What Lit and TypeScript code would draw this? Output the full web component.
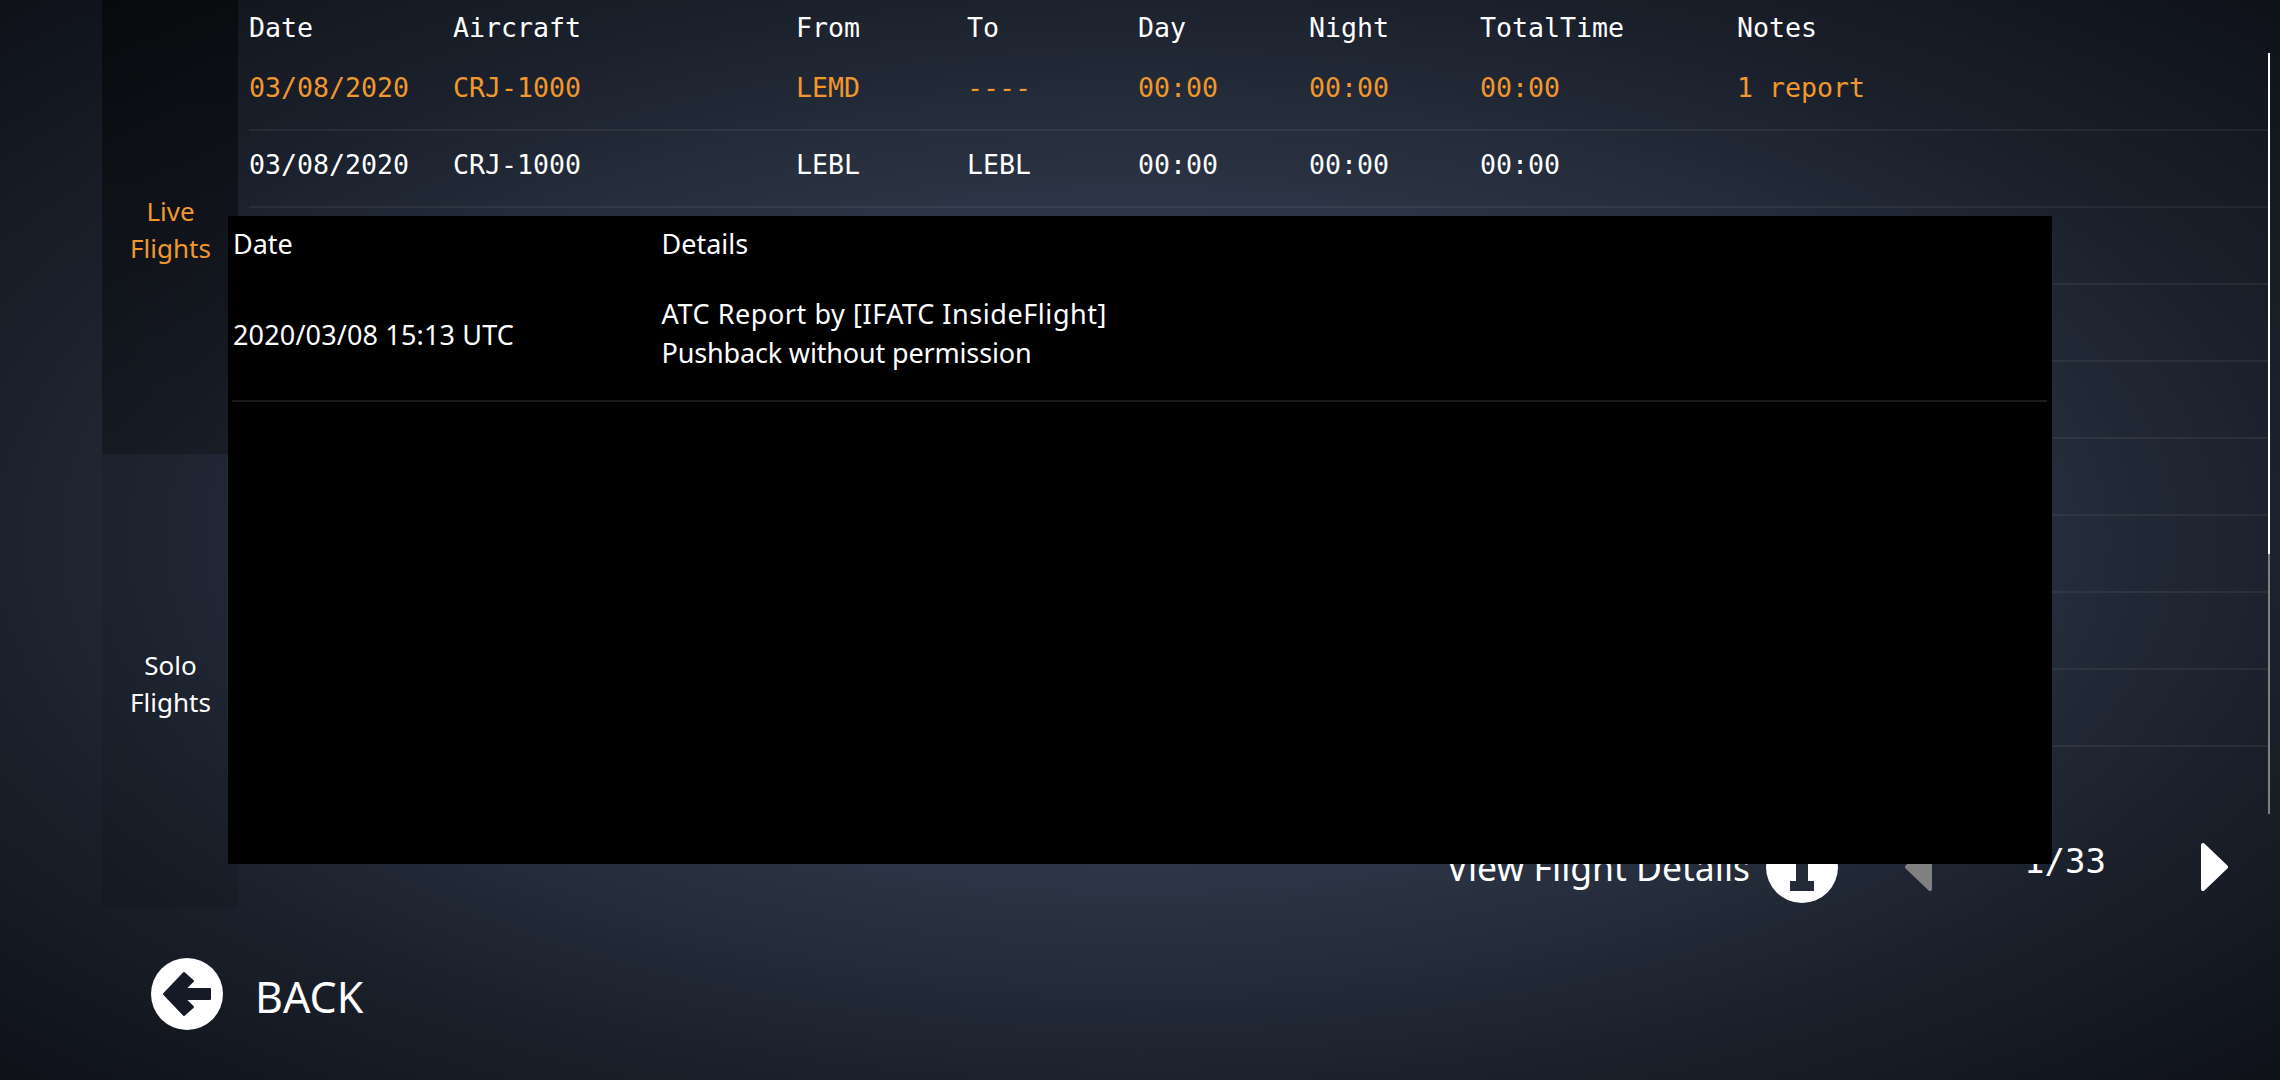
import { LitElement, html, css } from "lit";
import { customElement } from "lit/decorators.js";

const rows = [
  { cells: ["03/08/2020", "CRJ-1000", "LEMD", "----", "00:00", "00:00", "00:00", "1 report"], active: true },
  { cells: ["03/08/2020", "CRJ-1000", "LEBL", "LEBL", "00:00", "00:00", "00:00", ""], active: false },
  ...Array.from({ length: 7 }, () => ({ cells: [] as string[], active: false })),
];

@customElement("app-root")
export class AppRoot extends LitElement {
  static styles = css`
    :host {
      display: block;
      width: 2280px;
      height: 1080px;
      position: relative;
      overflow: hidden;
      color: #fff;
      font-family: "Noto Sans", sans-serif;
      background: radial-gradient(ellipse farthest-corner at 50% 50%, #363f54 0%, #2c3445 45%, #1b212c 72%, #0e1118 100%);
    }
    .top { display: flex; height: 908px; padding-left: 102px; }
    .side { width: 136px; display: flex; flex-direction: column; flex: none; }
    .tab {
      flex: 1;
      display: flex;
      align-items: center;
      justify-content: center;
      text-align: center;
      box-sizing: border-box;
      padding: 6px 0 0 1px;
      font-size: 26px;
      line-height: 37px;
      background: rgba(0, 0, 0, 0.1);
    }
    .tab.active {
      color: #f0982e;
      background: linear-gradient(180deg, rgba(0, 0, 0, 0.5), rgba(0, 0, 0, 0.33));
    }
    .main { flex: 1; display: flex; flex-direction: column; padding-left: 11px; padding-right: 10px; }
    .mono { font-family: "DejaVu Sans Mono", monospace; font-size: 26.6px; }
    .grid { display: grid; grid-template-columns: 204px 343px 171px 171px 171px 171px 257px 1fr; align-items: center; white-space: pre; }
    .head { height: 53px; padding-top: 2px; box-sizing: border-box; }
    .body { display: flex; height: 761px; }
    .list { flex: 1; padding-top: 1px; }
    .row { height: 77px; box-sizing: border-box; border-bottom: 2px solid rgba(255, 255, 255, 0.06); padding-bottom: 9px; }
    .row.active { color: #f0982e; }
    .bar { width: 2px; display: flex; flex-direction: column; }
    .thumb { height: 501px; background: #fff; }
    .track { flex: 1; background: #808080; }
    .foot { flex: 1; display: flex; justify-content: flex-end; align-items: center; padding: 17px 42px 5px 0; }
    .view { font-size: 35.5px; white-space: nowrap; margin-right: 16px; }
    .prev { margin-left: 67px; }
    .pager { font-family: "DejaVu Sans Mono", monospace; font-size: 34px; margin: 0 95px 13px 92px; }
    svg { display: block; flex: none; }
    .bottom { display: flex; align-items: flex-start; padding: 50px 0 0 151px; }
    .back { font-size: 43px; margin-left: 32px; line-height: 72px; padding-top: 3px; }
    .modal {
      position: absolute;
      left: 228px;
      top: 216px;
      width: 1824px;
      height: 648px;
      box-sizing: border-box;
      padding: 0 5px 0 5px;
      background: #000;
      font-size: 27px;
    }
    .m-grid { display: grid; grid-template-columns: 428.5px 1fr; align-items: center; }
    .m-head { height: 50px; padding-top: 4px; box-sizing: border-box; }
    .m-row { height: 136px; border-bottom: 2px solid #1a1a1a; box-sizing: border-box; margin-left: -1px; padding-left: 1px; }
    .m-date { letter-spacing: 0.15px; padding-top: 2px; }
    .lines { line-height: 39px; }
    .l1 { letter-spacing: 0.56px; }
    .l2 { letter-spacing: -0.16px; }
  `;

  render() {
    return html`
      <div class="top">
        <div class="side">
          <div class="tab active">Live<br />Flights</div>
          <div class="tab">Solo<br />Flights</div>
        </div>
        <div class="main">
          <div class="grid head mono">
            ${["Date", "Aircraft", "From", "To", "Day", "Night", "TotalTime", "Notes"].map((h) => html`<span>${h}</span>`)}
          </div>
          <div class="body">
            <div class="list mono">
              ${rows.map(
                (r) => html`<div class="grid row ${r.active ? "active" : ""}">${r.cells.map((c) => html`<span>${c}</span>`)}</div>`
              )}
            </div>
            <div class="bar"><div class="thumb"></div><div class="track"></div></div>
          </div>
          <div class="foot">
            <span class="view">View Flight Details</span>
            <svg width="72" height="72" viewBox="0 0 72 72">
              <circle cx="36" cy="36" r="36" fill="#fff" />
              <path d="M30 4h12v10H30zM24 20h18v30h6v10H24V50h6V30h-6z" fill="#232a38" />
            </svg>
            <svg class="prev" width="27" height="48" viewBox="0 0 27 48">
              <path d="M25 2 2 24l23 22z" fill="#808080" stroke="#808080" stroke-width="4" stroke-linejoin="round" />
            </svg>
            <span class="pager">1/33</span>
            <svg width="27" height="48" viewBox="0 0 27 48">
              <path d="M2 2l23 22L2 46z" fill="#fff" stroke="#fff" stroke-width="4" stroke-linejoin="round" />
            </svg>
          </div>
        </div>
      </div>
      <div class="bottom">
        <svg width="72" height="72" viewBox="0 0 72 72">
          <circle cx="36" cy="36" r="36" fill="#fff" />
          <path d="M13 36 33 15l9 8-8 8h25v10H34l8 8-9 8z" fill="#161a26" stroke="#161a26" stroke-width="2" stroke-linejoin="round" />
        </svg>
        <span class="back">BACK</span>
      </div>
      <div class="modal">
        <div class="m-grid m-head"><span>Date</span><span>Details</span></div>
        <div class="m-grid m-row">
          <span class="m-date">2020/03/08 15:13 UTC</span>
          <div class="lines"><span class="l1">ATC Report by [IFATC InsideFlight]</span><br /><span class="l2">Pushback without permission</span></div>
        </div>
      </div>
    `;
  }
}
